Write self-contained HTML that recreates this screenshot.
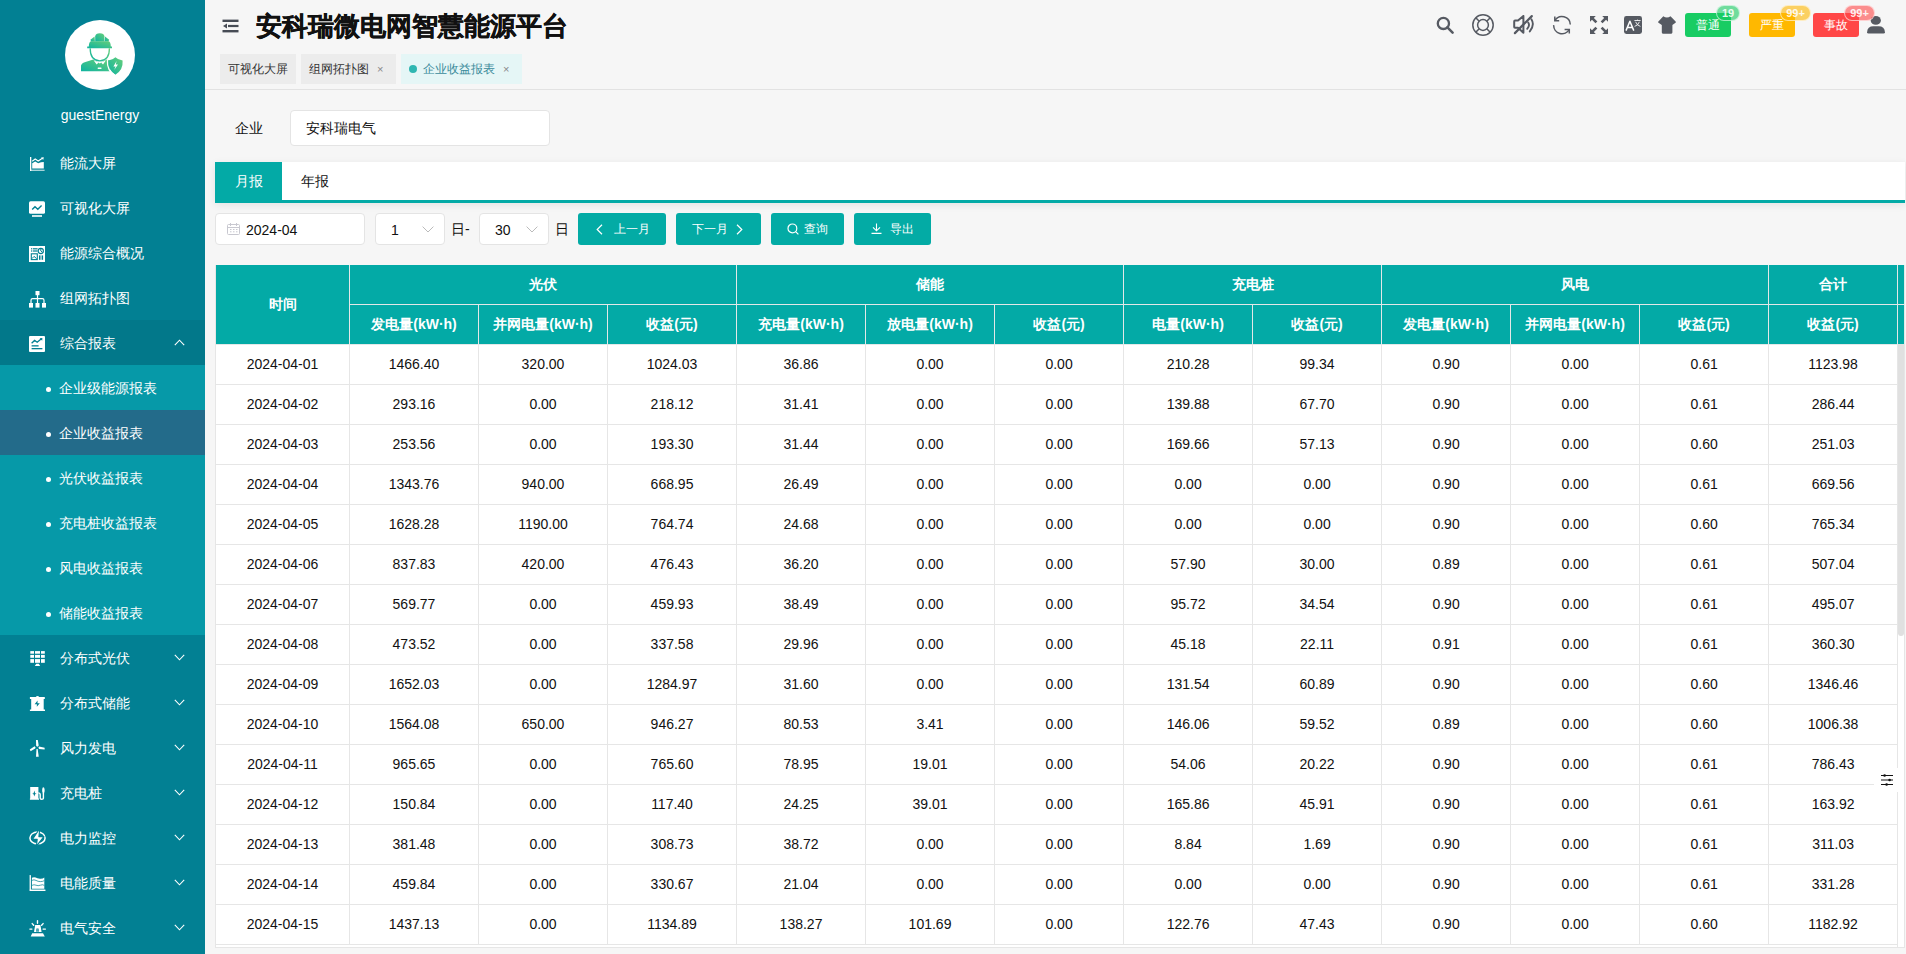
<!DOCTYPE html><html><head><meta charset="utf-8"><title>安科瑞微电网智慧能源平台</title><style>
*{box-sizing:border-box;margin:0;padding:0}
html,body{width:1906px;height:954px;overflow:hidden}
body{background:#f6f6f6;font-family:"Liberation Sans",sans-serif;position:relative;color:#111;font-weight:500}
.abs{position:absolute}
#side{position:absolute;left:0;top:0;width:205px;height:954px;background:#028093;overflow:hidden}
#avatar{position:absolute;left:65px;top:20px;width:70px;height:70px;border-radius:50%;background:#fff}
#uname{position:absolute;left:0;top:105px;width:200px;text-align:center;color:#fff;font-size:14px;line-height:20px}
.mi{position:absolute;left:0;width:205px;height:45px;color:#fff;font-size:14px;line-height:45px}
.mi .ic{position:absolute;left:29px;top:16px;width:17px;height:17px;line-height:0}
.mi .tx{position:absolute;left:60px;top:1px}
.mi .chev{position:absolute;left:174px;top:19px;width:11px;height:7px;line-height:0}
.mi.sub .dot{position:absolute;left:45.5px;top:22px;width:5px;height:5px;border-radius:50%;background:#fff}
.mi.sub .tx{left:59px}
#hdr-line{position:absolute;left:205px;top:89px;width:1701px;height:1px;background:#e2e2e2}
.title{position:absolute;left:256px;top:8px;font-size:26px;font-weight:bold;color:#111;-webkit-text-stroke:.35px #111;line-height:36px;white-space:nowrap}
.tag{position:absolute;top:54px;height:30px;line-height:30px;font-size:12px;color:#333;background:#ececec;padding-left:8px;white-space:nowrap}
.tag .x{position:absolute;font-size:11px;color:#888}
.btn{position:absolute;top:213px;height:32px;background:#03aba5;border-radius:3px;color:#fff;font-size:12px;line-height:32px}
.inp{position:absolute;background:#fff;border:1px solid #e4e4e4;border-radius:4px}
.t-ico{position:absolute;line-height:0}
.alarm{position:absolute;top:13px;width:46px;height:24px;border-radius:3px;color:#fff;font-size:12px;line-height:24px;text-align:center}
.badge{position:absolute;top:5px;height:16px;border-radius:8px;color:rgba(255,255,255,.9);font-size:11px;font-weight:bold;line-height:14px;text-align:center;border:1px solid rgba(255,255,255,.6)}
#tbl{position:absolute;left:215px;top:265px;width:1690px;height:683px;border:1px solid #e6e6e6;border-top:none;overflow:hidden;background:#fff}
table{border-collapse:separate;border-spacing:0;table-layout:fixed;position:absolute;left:0;top:0}
th{background:#03aaa6;color:#fff;font-weight:bold;font-size:14px;height:40px;border-right:1px solid #e3e8e8;border-bottom:1px solid #e3e8e8;text-align:center;padding:0}
td{font-size:14px;color:#111;height:40px;border-right:1px solid #e6e6e6;border-bottom:1px solid #e6e6e6;text-align:center;padding:0 0 2px;background:#fff}
</style></head><body>
<div id="side">
<div id="avatar"><svg width="70" height="70" viewBox="0 0 70 70" ><defs><linearGradient id="wg" x1="0" y1="1" x2="1" y2="0"><stop offset="0" stop-color="#0fb3a0"/><stop offset="1" stop-color="#66cf7a"/></linearGradient></defs><g fill="url(#wg)"><path d="M30.2 21.4V16.2Q30.6 13.4 34.8 13.3Q39 13.4 39.4 16.2V21.4Z"/><path d="M25.4 19.8L29.6 16.6L29.9 21.4H26.2Z"/><path d="M44.2 19.8L40 16.6L39.7 21.4H43.4Z"/><path d="M23.8 26.4Q24 21.4 26 21.2H43.6Q45.6 21.4 45.8 26.4H47V28.2H22.2V26.4Z"/><path d="M16 51.2V45.4Q16.8 42.6 22 41.4L28.4 39.6L34.8 43.6L41.2 39.6L44.8 40.8V51.2Z"/><path d="M43.4 40.6Q48.2 39.6 50.4 37.2Q52.8 39.6 57.6 40.6Q58.4 50 50.4 54.8Q42.6 50 43.4 40.6Z"/></g><path d="M25.2 28.2Q25 40.2 34.8 40.8Q44.6 40.2 44.4 28.2" stroke="url(#wg)" stroke-width="1.3" fill="none"/><path d="M28.6 40.2L31.6 44.6L33.6 42.6Z M41 40.2L38 44.6L36 42.6Z" fill="#fff"/><rect x="32.6" y="47.6" width="4" height="1.3" rx=".6" fill="#fff"/><path d="M42.4 40Q41.6 50.6 50.4 55.8" stroke="#fff" stroke-width="1.2" fill="none"/><path d="M51.6 41L48.4 46.6H50.6L49.2 50L53 44.6H50.8Z" fill="#fff"/></svg></div>
<div id="uname">guestEnergy</div>
<div class="mi" style="top:140px"><div class="ic"><svg width="16" height="16" viewBox="0 0 16 16" ><rect x="1" y="1" width="1.3" height="14" fill="#fff"/><rect x="1" y="13.6" width="14.6" height="1.4" fill="#fff" opacity=".65"/><path d="M3.2 12.6V7.2L6.2 5.4L9.2 7.2L12 6.2L14.8 6V12.6Z" fill="#fff"/><path d="M3.2 5.2L6.2 3L9.2 5L13.4 2.2" stroke="#fff" stroke-width="1.1" fill="none"/><path d="M12 1.4L14.8 1.2L14.2 3.9Z" fill="#fff"/></svg></div><div class="tx">能流大屏</div></div>
<div class="mi" style="top:185px"><div class="ic"><svg width="16" height="16" viewBox="0 0 16 16" ><rect x="0" y="0.2" width="16" height="12.6" rx="1.6" fill="#fff"/><path d="M3.2 8.6L6 5.8L8.8 8.2L12.6 4.6" stroke="#028093" stroke-width="1.4" fill="none"/><rect x="3" y="14.2" width="10" height="1.6" fill="#fff"/></svg></div><div class="tx">可视化大屏</div></div>
<div class="mi" style="top:230px"><div class="ic"><svg width="16" height="16" viewBox="0 0 16 16" ><rect x="0" y="0" width="16" height="16" fill="#fff"/><rect x="2" y="2.2" width="1.3" height="1.2" fill="#028093"/><rect x="4" y="2.2" width="4.6" height="1.2" fill="#028093"/><rect x="2" y="4.4" width="1.3" height="1.2" fill="#028093"/><rect x="4" y="4.4" width="4.6" height="1.2" fill="#028093"/><circle cx="11.8" cy="5" r="2.6" stroke="#028093" stroke-width="1.1" fill="none"/><path d="M11.8 5V2.6M11.8 5L13.6 6.4" stroke="#028093" stroke-width="1"/><rect x="2.3" y="7.8" width="6" height="5.8" stroke="#028093" stroke-width="1.1" fill="none"/><path d="M3 12.6L5 10.4L7.6 12.6" stroke="#028093" stroke-width="1" fill="none"/><rect x="10" y="9.4" width="1.5" height="4.4" fill="#028093"/><rect x="12.6" y="9.4" width="1.5" height="4.4" fill="#028093"/></svg></div><div class="tx">能源综合概况</div></div>
<div class="mi" style="top:275px"><div class="ic"><svg width="17" height="17" viewBox="0 0 17 17" ><rect x="6.5" y="0" width="4" height="4.2" fill="#fff"/><rect x="7.9" y="4" width="1.2" height="8" fill="#fff"/><path d="M2 12V9.2Q2 7.6 3.6 7.6H13.4Q15 7.6 15 9.2V12" stroke="#fff" stroke-width="1.2" fill="none"/><rect x="0" y="12" width="4" height="4.6" fill="#fff"/><rect x="6.5" y="12" width="4" height="4.6" fill="#fff"/><rect x="13" y="12" width="4" height="4.6" fill="#fff"/></svg></div><div class="tx">组网拓扑图</div></div>
<div class="mi" style="top:320px;background:#02788a"><div class="ic"><svg width="16" height="16" viewBox="0 0 16 16" ><rect x="0" y="0" width="16" height="16" rx="1" fill="#fff"/><path d="M2.6 7.2L5.6 4.4L8.2 6.2L12.4 2.8" stroke="#028093" stroke-width="1.3" fill="none"/><path d="M10.6 2.2L13.4 2L13.2 4.8Z" fill="#028093"/><rect x="2.6" y="9.2" width="7" height="1.3" fill="#028093"/><rect x="2.6" y="12" width="10.8" height="1.3" fill="#028093"/></svg></div><div class="tx">综合报表</div><div class="chev"><svg width="11" height="7" viewBox="0 0 11 7" ><path d="M0.8 6.2L5.5 1.2L10.2 6.2" stroke="#fff" stroke-width="1.1" fill="none"/></svg></div></div>
<div class="abs" style="left:0;top:365px;width:205px;height:270px;background:#0699a8"></div>
<div class="mi sub" style="top:365px;"><div class="dot"></div><div class="tx">企业级能源报表</div></div>
<div class="mi sub" style="top:410px;background:#236b8a;"><div class="dot"></div><div class="tx">企业收益报表</div></div>
<div class="mi sub" style="top:455px;"><div class="dot"></div><div class="tx">光伏收益报表</div></div>
<div class="mi sub" style="top:500px;"><div class="dot"></div><div class="tx">充电桩收益报表</div></div>
<div class="mi sub" style="top:545px;"><div class="dot"></div><div class="tx">风电收益报表</div></div>
<div class="mi sub" style="top:590px;"><div class="dot"></div><div class="tx">储能收益报表</div></div>
<div class="mi" style="top:635px"><div class="ic"><svg width="17" height="16" viewBox="0 0 17 16" ><rect x="1.3" y="0.1" width="3.7" height="2.6" fill="#fff"/><rect x="1.3" y="3.9" width="3.7" height="2.9" fill="#fff"/><rect x="1.3" y="8.1" width="3.7" height="3.700000000000001" fill="#fff"/><rect x="6" y="0.1" width="5" height="2.6" fill="#fff"/><rect x="6" y="3.9" width="5" height="2.9" fill="#fff"/><rect x="6" y="8.1" width="5" height="3.700000000000001" fill="#fff"/><rect x="12" y="0.1" width="3.8000000000000007" height="2.6" fill="#fff"/><rect x="12" y="3.9" width="3.8000000000000007" height="2.9" fill="#fff"/><rect x="12" y="8.1" width="3.8000000000000007" height="3.700000000000001" fill="#fff"/><path d="M7.3 12.8H9.8L11.2 14.9H5.8Z" fill="#fff"/></svg></div><div class="tx">分布式光伏</div><div class="chev"><svg width="11" height="7" viewBox="0 0 11 7" ><path d="M0.8 0.8L5.5 5.8L10.2 0.8" stroke="#fff" stroke-width="1.1" fill="none"/></svg></div></div>
<div class="mi" style="top:680px"><div class="ic"><svg width="16" height="16" viewBox="0 0 16 16" ><path d="M0.9 0.9H6.8Q7.4 0 8.5 0Q9.6 0 10.2 0.9H15.8V2.9H14.7V13.5H16V14.9H0.9V13.5H2.2V2.9H0.9Z" fill="#fff"/><path d="M8.6 4.6L5.6 8.2H7.9L7.8 10.8L10.8 7.2H8.5Z" fill="#028093"/></svg></div><div class="tx">分布式储能</div><div class="chev"><svg width="11" height="7" viewBox="0 0 11 7" ><path d="M0.8 0.8L5.5 5.8L10.2 0.8" stroke="#fff" stroke-width="1.1" fill="none"/></svg></div></div>
<div class="mi" style="top:725px"><div class="ic"><svg width="16" height="16" viewBox="0 0 16 16" style="overflow:visible"><path d="M7 -1H8.8L9.7 4.6L8.6 5.8L7.2 5Z" fill="#fff"/><path d="M10 5.6L15.6 6.8V8.4L10 8.1L9.5 6.6Z" fill="#fff"/><path d="M0.8 8.6L5.6 5.2L6.6 6.4L6.2 7.6L1.6 10.3Z" fill="#fff"/><path d="M7.5 8H8.7L9.7 15.8H7Z" fill="#fff"/></svg></div><div class="tx">风力发电</div><div class="chev"><svg width="11" height="7" viewBox="0 0 11 7" ><path d="M0.8 0.8L5.5 5.8L10.2 0.8" stroke="#fff" stroke-width="1.1" fill="none"/></svg></div></div>
<div class="mi" style="top:770px"><div class="ic"><svg width="16" height="16" viewBox="0 0 16 16" ><path d="M1.2 1.1H9.4V12.6H10V13.8H0.9V12.6H1.2Z" fill="#fff"/><path d="M5.3 4.6L4.6 7.2L3.2 7.7L4.6 8.2L5.3 10.4L6.1 8.2L7.6 7.7L6.1 7.2Z" fill="#028093"/><path d="M9.3 6.9Q11.2 6.9 11.2 8.8V12.2Q11.2 13.2 12.6 13.2Q14.4 13.2 14.4 12.2V7" stroke="#fff" stroke-width="1.4" fill="none"/><path d="M14.3 1.2Q15.4 1.2 15.6 3.6Q15.9 5 15 7.4H13.8Q12.9 5 13.2 3.6Q13.4 1.2 14.3 1.2Z" fill="#fff"/></svg></div><div class="tx">充电桩</div><div class="chev"><svg width="11" height="7" viewBox="0 0 11 7" ><path d="M0.8 0.8L5.5 5.8L10.2 0.8" stroke="#fff" stroke-width="1.1" fill="none"/></svg></div></div>
<div class="mi" style="top:815px"><div class="ic"><svg width="17" height="16" viewBox="0 0 17 16" style="overflow:visible"><ellipse cx="8.5" cy="6.9" rx="7.6" ry="5.9" stroke="#fff" stroke-width="1.5" fill="none"/><path d="M9.6 -0.8H10.6L9.9 5.6H14.9L7.4 15.2L8.2 8.4H3.4Z" fill="#fff" stroke="#028093" stroke-width="1.1" stroke-linejoin="round"/></svg></div><div class="tx">电力监控</div><div class="chev"><svg width="11" height="7" viewBox="0 0 11 7" ><path d="M0.8 0.8L5.5 5.8L10.2 0.8" stroke="#fff" stroke-width="1.1" fill="none"/></svg></div></div>
<div class="mi" style="top:860px"><div class="ic"><svg width="17" height="16" viewBox="0 0 17 16" style="overflow:visible"><rect x="0.6" y="-1" width="1.3" height="15.8" rx=".6" fill="#fff"/><rect x="0.6" y="13.5" width="16" height="1.4" rx=".6" fill="#fff"/><path d="M2.9 1.8Q5 0.6 6.6 1.6T11 2.8T15.3 1.6V12.8H2.9Z" fill="#fff"/><path d="M2.9 4.4Q5 3.2 7 4.4T11.4 5.6T15.3 4.6M2.9 9.4Q5 8.2 7 9.2T11.4 9.2T15.3 9.4" stroke="#028093" stroke-width=".9" fill="none" opacity=".8"/></svg></div><div class="tx">电能质量</div><div class="chev"><svg width="11" height="7" viewBox="0 0 11 7" ><path d="M0.8 0.8L5.5 5.8L10.2 0.8" stroke="#fff" stroke-width="1.1" fill="none"/></svg></div></div>
<div class="mi" style="top:905px"><div class="ic"><svg width="17" height="16" viewBox="0 0 17 16" style="overflow:visible"><path d="M6.2 4H11.4L12.6 11.1H5Z" fill="#fff"/><path d="M7 10.8V8.6Q7 7.3 8.5 7.3Q10 7.3 10 8.6V10.8Z" fill="#028093" opacity=".7"/><path d="M3.2 12.3H14L15.8 15.5H1.7Z" fill="#fff"/><path d="M8.5 -0.4V2.3M3.2 2.6L4.7 4.3M14.1 2.6L12.6 4.3M0.9 8.1H2.9M14.1 8.1H16.4" stroke="#fff" stroke-width="1.4" stroke-linecap="round"/></svg></div><div class="tx">电气安全</div><div class="chev"><svg width="11" height="7" viewBox="0 0 11 7" ><path d="M0.8 0.8L5.5 5.8L10.2 0.8" stroke="#fff" stroke-width="1.1" fill="none"/></svg></div></div>
</div>
<div class="t-ico" style="left:222px;top:19px"><svg width="17" height="14" viewBox="0 0 17 14" ><rect x="0.5" y="0.6" width="16" height="2.4" fill="#474c55"/><rect x="6" y="5.9" width="10.5" height="2.2" fill="#474c55"/><path d="M1 7.1L5 4.6V9.6Z" fill="#474c55"/><rect x="0.5" y="11" width="16" height="2.4" fill="#474c55"/></svg></div>
<div class="title">安科瑞微电网智慧能源平台</div>
<div class="tag" style="left:220px;width:76px">可视化大屏</div>
<div class="tag" style="left:301px;width:95px">组网拓扑图<span class="x" style="left:76px">×</span></div>
<div class="tag" style="left:401px;width:121px;background:#e5f6f6;color:#3b8b9b;padding-left:22px"><span class="abs" style="left:8px;top:11px;width:8px;height:8px;border-radius:50%;background:#2fb6b1"></span>企业收益报表<span class="x" style="left:102px">×</span></div>
<div id="hdr-line"></div>
<div class="t-ico" style="left:1436px;top:16px"><svg width="18" height="18" viewBox="0 0 18 18" ><circle cx="7.4" cy="7.4" r="5.6" stroke="#565a62" stroke-width="2.3" fill="none"/><path d="M11.4 11.4L16.6 16.6" stroke="#565a62" stroke-width="2.5" stroke-linecap="round"/></svg></div>
<div class="t-ico" style="left:1472px;top:14px"><svg width="22" height="22" viewBox="0 0 22 22" ><circle cx="11" cy="11" r="10.2" stroke="#565a62" stroke-width="1.5" fill="none"/><circle cx="11" cy="11" r="5.4" stroke="#565a62" stroke-width="1.5" fill="none"/><path d="M3.8 3.8L7.2 7.2M18.2 3.8L14.8 7.2M3.8 18.2L7.2 14.8M18.2 18.2L14.8 14.8" stroke="#565a62" stroke-width="1.5"/></svg></div>
<div class="t-ico" style="left:1513px;top:15px"><svg width="22" height="20" viewBox="0 0 22 20" ><path d="M1.2 6.4Q1.2 5.6 2 5.6H5L10.4 0.9V17.8L5 12.8H2Q1.2 12.8 1.2 12Z" stroke="#565a62" stroke-width="2" fill="none" stroke-linejoin="round"/><path d="M15.2 7.4Q17.2 10.6 14.2 13.8M18.4 4.2Q22 10 16.8 16.4" stroke="#565a62" stroke-width="1.9" fill="none" stroke-linecap="round"/><path d="M1.9 18.1L18.8 1.1" stroke="#565a62" stroke-width="2.2" stroke-linecap="round"/></svg></div>
<div class="t-ico" style="left:1552px;top:15px"><svg width="20" height="20" viewBox="0 0 20 20" ><path d="M2.8 5.7A8.3 8.3 0 0 1 18.3 9.6" stroke="#565a62" stroke-width="1.5" fill="none"/><path d="M2.8 1.4V5.7H7.2" stroke="#565a62" stroke-width="1.5" fill="none"/><path d="M1.7 10.1A8.3 8.3 0 0 0 17.3 14.4" stroke="#565a62" stroke-width="1.5" fill="none"/><path d="M12.6 14.4H17.3V18.4" stroke="#565a62" stroke-width="1.5" fill="none"/></svg></div>
<div class="t-ico" style="left:1590px;top:16px"><svg width="18" height="18" viewBox="0 0 18 18" ><path d="M0 0H5.8L0 5.8Z M18 0V5.8L12.2 0Z M0 18V12.2L5.8 18Z M18 18H12.2L18 12.2Z" fill="#565a62"/><path d="M2.4 2.4L6.4 6.4M15.6 2.4L11.6 6.4M2.4 15.6L6.4 11.6M15.6 15.6L11.6 11.6" stroke="#565a62" stroke-width="2.7"/></svg></div>
<div class="t-ico" style="left:1624px;top:16px"><svg width="18" height="18" viewBox="0 0 18 18" ><rect x="0" y="0" width="18" height="18" rx="2.4" fill="#565a62"/><path d="M2 14.6L5.9 5.2L9.8 14.6M3.3 11.4H8.5" stroke="#fff" stroke-width="1.5" fill="none" stroke-linejoin="round"/><path d="M10.4 4.5H16.6M13.5 3.6V4.5M11.6 5.8Q13 9.6 16.4 10.4M15.4 5.8Q14 9.6 10.6 10.4" stroke="#fff" stroke-width=".85" fill="none"/></svg></div>
<div class="t-ico" style="left:1658px;top:16px"><svg width="18" height="18" viewBox="0 0 18 18" ><path d="M5.3 0.2Q7 1.6 8.9 1.6Q10.8 1.6 12.5 0.2L17.6 5.4Q18.2 6.1 17.5 6.8L14.4 9V16.6Q14.2 17.8 13 17.8H5.2Q4 17.8 3.8 16.6V9L0.5 6.8Q-0.2 6.1 0.4 5.4Z" fill="#565a62"/></svg></div>
<div class="t-ico" style="left:1867px;top:16px"><svg width="18" height="18" viewBox="0 0 18 18" ><ellipse cx="8.8" cy="4.4" rx="5.1" ry="4.4" fill="#565a62"/><path d="M0.1 16.2Q0.4 10.3 6.4 10.3H11.6Q17.6 10.3 17.9 16.2Q17.9 17.6 16.5 17.6H1.5Q0.1 17.6 0.1 16.2Z" fill="#565a62"/></svg></div>
<div class="alarm" style="left:1685px;background:#18cc63">普通</div>
<div class="badge" style="left:1716px;width:24px;background:rgba(24,204,99,.6)">19</div>
<div class="alarm" style="left:1749px;background:#ffb800">严重</div>
<div class="badge" style="left:1780px;width:31px;background:rgba(255,184,0,.6)">99+</div>
<div class="alarm" style="left:1813px;background:#ff4747">事故</div>
<div class="badge" style="left:1844px;width:31px;background:rgba(255,71,71,.6)">99+</div>
<div class="abs" style="left:235px;top:118px;font-size:14px;line-height:20px;color:#111">企业</div>
<div class="inp" style="left:290px;top:110px;width:260px;height:36px"><span class="abs" style="left:15px;top:7px;font-size:14px;line-height:20px;color:#111">安科瑞电气</span></div>
<div class="abs" style="left:215px;top:162px;width:1690px;height:41px;background:#fff;border-bottom:3px solid #03aaa6;box-shadow:0 2px 8px rgba(0,0,0,.08)"></div>
<div class="abs" style="left:215px;top:162px;width:67px;height:38px;background:#03aaa6;color:#fff;font-size:14px;line-height:38px;text-align:center">月报</div>
<div class="abs" style="left:301px;top:162px;font-size:14px;line-height:38px;color:#111">年报</div>
<div class="inp" style="left:215px;top:213px;width:150px;height:32px"><span class="abs" style="left:11px;top:9px;line-height:0"><svg width="13" height="12" viewBox="0 0 13 12" ><rect x="0.5" y="1.5" width="12" height="10" rx="1" stroke="#c8c8d0" fill="none"/><path d="M0.5 4.5H12.5M3.5 0V3M9.5 0V3" stroke="#c8c8d0"/><path d="M3 6.5H4.5M6 6.5H7.5M9 6.5H10.5M3 8.8H4.5M6 8.8H7.5M9 8.8H10.5" stroke="#c8c8d0"/></svg></span><span class="abs" style="left:30px;top:6px;font-size:14px;line-height:20px;color:#111">2024-04</span></div>
<div class="inp" style="left:375px;top:213px;width:70px;height:32px"><span class="abs" style="left:15px;top:6px;font-size:14px;line-height:20px;color:#111">1</span><span class="abs" style="left:46px;top:12px;line-height:0"><svg width="12" height="7" viewBox="0 0 12 7" ><path d="M0.6 0.6L6 6L11.4 0.6" stroke="#bbb" stroke-width="1" fill="none"/></svg></span></div>
<div class="abs" style="left:451px;top:219px;font-size:14px;line-height:20px;color:#111">日-</div>
<div class="inp" style="left:479px;top:213px;width:70px;height:32px"><span class="abs" style="left:15px;top:6px;font-size:14px;line-height:20px;color:#111">30</span><span class="abs" style="left:46px;top:12px;line-height:0"><svg width="12" height="7" viewBox="0 0 12 7" ><path d="M0.6 0.6L6 6L11.4 0.6" stroke="#bbb" stroke-width="1" fill="none"/></svg></span></div>
<div class="abs" style="left:555px;top:219px;font-size:14px;line-height:20px;color:#111">日</div>
<div class="btn" style="left:578px;width:88px"><span class="abs" style="left:18px;top:11px;line-height:0"><svg width="7" height="11" viewBox="0 0 7 11"><path d="M6 0.8L1.2 5.5L6 10.2" stroke="#fff" stroke-width="1.2" fill="none"/></svg></span><span class="abs" style="left:36px">上一月</span></div>
<div class="btn" style="left:676px;width:85px"><span class="abs" style="left:16px">下一月</span><span class="abs" style="left:60px;top:11px;line-height:0"><svg width="7" height="11" viewBox="0 0 7 11"><path d="M1 0.8L5.8 5.5L1 10.2" stroke="#fff" stroke-width="1.2" fill="none"/></svg></span></div>
<div class="btn" style="left:771px;width:73px"><span class="abs" style="left:16px;top:10px;line-height:0"><svg width="12" height="12" viewBox="0 0 12 12"><circle cx="5.4" cy="5.4" r="4.4" stroke="#fff" stroke-width="1.2" fill="none"/><path d="M8.6 8.6L11.4 11.4" stroke="#fff" stroke-width="1.2"/></svg></span><span class="abs" style="left:33px">查询</span></div>
<div class="btn" style="left:854px;width:77px"><span class="abs" style="left:17px;top:10px;line-height:0"><svg width="11" height="11" viewBox="0 0 11 11"><path d="M5.5 0.5V7.5M2 4.4L5.5 7.8L9 4.4M0.5 10.4H10.5" stroke="#fff" stroke-width="1.1" fill="none"/></svg></span><span class="abs" style="left:36px">导出</span></div>
<div id="tbl">
<table style="width:1682px"><colgroup><col style="width:134px"><col style="width:129px"><col style="width:129px"><col style="width:129px"><col style="width:129px"><col style="width:129px"><col style="width:129px"><col style="width:129px"><col style="width:129px"><col style="width:129px"><col style="width:129px"><col style="width:129px"><col style="width:129px"></colgroup>
<tr><th rowspan="2">时间</th><th colspan="3">光伏</th><th colspan="3">储能</th><th colspan="2">充电桩</th><th colspan="3">风电</th><th>合计</th></tr>
<tr><th>发电量(kW·h)</th><th>并网电量(kW·h)</th><th>收益(元)</th><th>充电量(kW·h)</th><th>放电量(kW·h)</th><th>收益(元)</th><th>电量(kW·h)</th><th>收益(元)</th><th>发电量(kW·h)</th><th>并网电量(kW·h)</th><th>收益(元)</th><th>收益(元)</th></tr>
<tr><td>2024-04-01</td><td>1466.40</td><td>320.00</td><td>1024.03</td><td>36.86</td><td>0.00</td><td>0.00</td><td>210.28</td><td>99.34</td><td>0.90</td><td>0.00</td><td>0.61</td><td>1123.98</td></tr>
<tr><td>2024-04-02</td><td>293.16</td><td>0.00</td><td>218.12</td><td>31.41</td><td>0.00</td><td>0.00</td><td>139.88</td><td>67.70</td><td>0.90</td><td>0.00</td><td>0.61</td><td>286.44</td></tr>
<tr><td>2024-04-03</td><td>253.56</td><td>0.00</td><td>193.30</td><td>31.44</td><td>0.00</td><td>0.00</td><td>169.66</td><td>57.13</td><td>0.90</td><td>0.00</td><td>0.60</td><td>251.03</td></tr>
<tr><td>2024-04-04</td><td>1343.76</td><td>940.00</td><td>668.95</td><td>26.49</td><td>0.00</td><td>0.00</td><td>0.00</td><td>0.00</td><td>0.90</td><td>0.00</td><td>0.61</td><td>669.56</td></tr>
<tr><td>2024-04-05</td><td>1628.28</td><td>1190.00</td><td>764.74</td><td>24.68</td><td>0.00</td><td>0.00</td><td>0.00</td><td>0.00</td><td>0.90</td><td>0.00</td><td>0.60</td><td>765.34</td></tr>
<tr><td>2024-04-06</td><td>837.83</td><td>420.00</td><td>476.43</td><td>36.20</td><td>0.00</td><td>0.00</td><td>57.90</td><td>30.00</td><td>0.89</td><td>0.00</td><td>0.61</td><td>507.04</td></tr>
<tr><td>2024-04-07</td><td>569.77</td><td>0.00</td><td>459.93</td><td>38.49</td><td>0.00</td><td>0.00</td><td>95.72</td><td>34.54</td><td>0.90</td><td>0.00</td><td>0.61</td><td>495.07</td></tr>
<tr><td>2024-04-08</td><td>473.52</td><td>0.00</td><td>337.58</td><td>29.96</td><td>0.00</td><td>0.00</td><td>45.18</td><td>22.11</td><td>0.91</td><td>0.00</td><td>0.61</td><td>360.30</td></tr>
<tr><td>2024-04-09</td><td>1652.03</td><td>0.00</td><td>1284.97</td><td>31.60</td><td>0.00</td><td>0.00</td><td>131.54</td><td>60.89</td><td>0.90</td><td>0.00</td><td>0.60</td><td>1346.46</td></tr>
<tr><td>2024-04-10</td><td>1564.08</td><td>650.00</td><td>946.27</td><td>80.53</td><td>3.41</td><td>0.00</td><td>146.06</td><td>59.52</td><td>0.89</td><td>0.00</td><td>0.60</td><td>1006.38</td></tr>
<tr><td>2024-04-11</td><td>965.65</td><td>0.00</td><td>765.60</td><td>78.95</td><td>19.01</td><td>0.00</td><td>54.06</td><td>20.22</td><td>0.90</td><td>0.00</td><td>0.61</td><td>786.43</td></tr>
<tr><td>2024-04-12</td><td>150.84</td><td>0.00</td><td>117.40</td><td>24.25</td><td>39.01</td><td>0.00</td><td>165.86</td><td>45.91</td><td>0.90</td><td>0.00</td><td>0.61</td><td>163.92</td></tr>
<tr><td>2024-04-13</td><td>381.48</td><td>0.00</td><td>308.73</td><td>38.72</td><td>0.00</td><td>0.00</td><td>8.84</td><td>1.69</td><td>0.90</td><td>0.00</td><td>0.61</td><td>311.03</td></tr>
<tr><td>2024-04-14</td><td>459.84</td><td>0.00</td><td>330.67</td><td>21.04</td><td>0.00</td><td>0.00</td><td>0.00</td><td>0.00</td><td>0.90</td><td>0.00</td><td>0.61</td><td>331.28</td></tr>
<tr><td>2024-04-15</td><td>1437.13</td><td>0.00</td><td>1134.89</td><td>138.27</td><td>101.69</td><td>0.00</td><td>122.76</td><td>47.43</td><td>0.90</td><td>0.00</td><td>0.60</td><td>1182.92</td></tr>
</table>
<div class="abs" style="left:1682px;top:0;width:6px;height:79px;background:#03aaa6"></div>
<div class="abs" style="left:1682px;top:39px;width:6px;height:1px;background:#e3e8e8"></div>
<div class="abs" style="left:1681px;top:79px;width:7px;height:604px;background:#fff;border-left:1px solid #e6e6e6"></div>
<div class="abs" style="left:1682px;top:79px;width:6px;height:292px;background:#e0e0e0;border-radius:0 0 3px 3px"></div>
</div>
<div class="abs" style="left:1874px;top:768px;width:30px;height:24px;background:#fff"><span class="abs" style="left:7px;top:6px;line-height:0"><svg width="13" height="12" viewBox="0 0 13 12" ><path d="M0 1.5H12M0 6H12M0 10.5H12" stroke="#111" stroke-width="1"/><circle cx="3.6" cy="1.5" r="1.3" fill="#111"/><circle cx="8.6" cy="6" r="1.3" fill="#111"/><circle cx="5.6" cy="10.5" r="1.3" fill="#111"/></svg></span></div>
</body></html>
